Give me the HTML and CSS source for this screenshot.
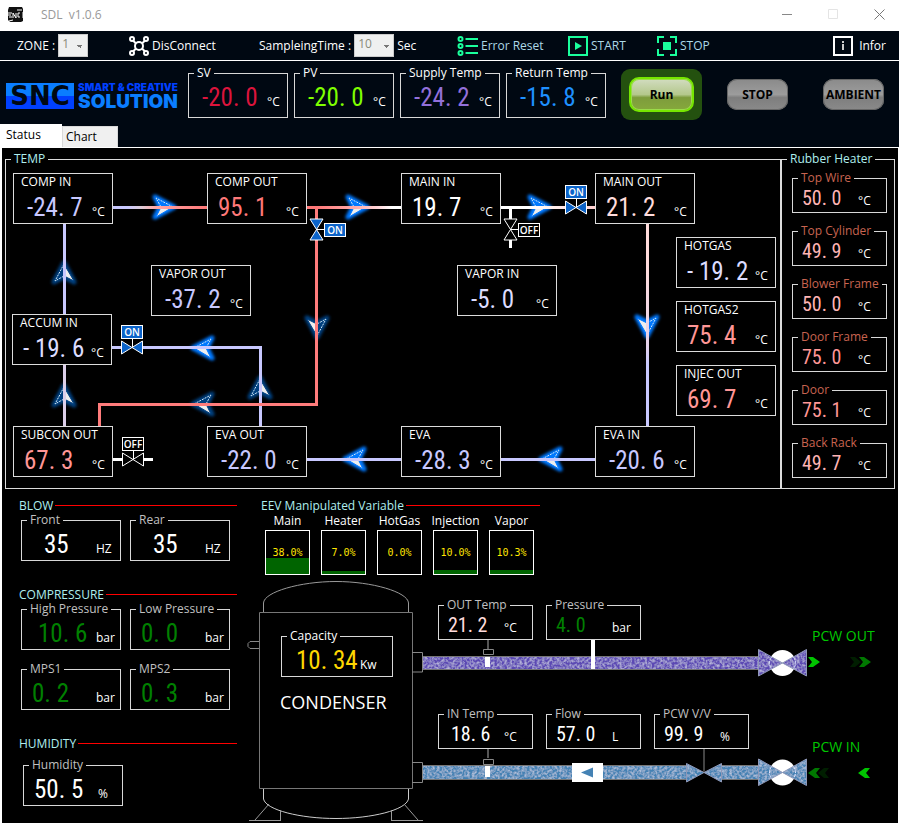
FILE: index.html
```html
<!DOCTYPE html>
<html lang="en">
<head>
<meta charset="utf-8">
<title>SDL v1.0.6</title>
<link rel="stylesheet" href="styles.css">
</head>
<body>
<header class="titlebar">
  <svg class="app-icon" width="16" height="16" viewBox="0 0 16 16" aria-hidden="true">
    <path d="M1 0h13l1 2v12l-2 1H2l-2-2V3z" fill="#111"/>
    <path d="M0 6h4M0 8h3M1 10h3M5 11V6l3 5V6M14 3H9M12 6h-2v4h2M15 5v6M1 14l4-1" stroke="#fff" fill="none"/>
  </svg>
  <span class="app-name">SDL&nbsp; v1.0.6</span>
  <div class="window-buttons">
    <button type="button" aria-label="Minimize"><svg width="11" height="11"><path d="M0 5.500h10" stroke="#888"/></svg></button>
    <button type="button" aria-label="Maximize" disabled><svg width="11" height="11"><path d="M.5.5h9v9h-9z" stroke="#e4e4e4" fill="none"/></svg></button>
    <button type="button" aria-label="Close"><svg width="11" height="11"><path d="M.5.5l10 10M10.500.5l-10 10" stroke="#777"/></svg></button>
  </div>
</header>

<nav class="toolbar">
  <div class="tool">
    <label for="zone">ZONE :</label>
    <select id="zone" class="combo"><option>1</option></select>
  </div>
  <button type="button" class="tool">
    <svg width="20" height="20" viewBox="0 0 20 20" fill="none" stroke="#fff" stroke-width="2">
      <circle cx="3" cy="3" r="2"/><circle cx="17" cy="3" r="2"/><circle cx="3" cy="17" r="2"/><circle cx="17" cy="17" r="2"/>
      <circle cx="10" cy="10" r="4"/><path d="M4 4.500l3 3M16 4.500l-3 3M4 15.500l3-3M16 15.500l-3-3"/>
    </svg>DisConnect</button>
  <div class="tool">
    <label for="sampling">SampleingTime :</label>
    <select id="sampling" class="combo combo-wide"><option>10</option></select>
    <span>Sec</span>
  </div>
  <button type="button" class="tool tool-blue">
    <svg width="21" height="20" viewBox="0 0 21 20" fill="none" stroke="#1aff9c" stroke-width="2">
      <circle cx="3.500" cy="3" r="2"/><circle cx="3.500" cy="10" r="2"/><circle cx="3.500" cy="17" r="2"/>
      <path d="M8.500 3H21M8.500 10H21M8.500 17H21"/>
    </svg>Error Reset</button>
  <button type="button" class="tool tool-blue">
    <svg width="20" height="20" viewBox="0 0 20 20"><path d="M1 1h18v18H1z" fill="none" stroke="#1aff9c" stroke-width="2"/><path d="M7 6l7 4-7 4z" fill="#1aff9c"/></svg>START</button>
  <button type="button" class="tool tool-blue">
    <svg width="20" height="20" viewBox="0 0 20 20"><path d="M1 7V1h6M13 1h6v6M19 13v6h-6M7 19H1v-6" fill="none" stroke="#1aff9c" stroke-width="2"/><path d="M6 6h8v8H6z" fill="#1aff9c"/></svg>STOP</button>
  <button type="button" class="tool tool-info">
    <svg width="20" height="20" viewBox="0 0 20 20"><path d="M1 1h18v18H1z" fill="none" stroke="#fff" stroke-width="2"/><path d="M9 5h2v2H9zM9 8h2v6H9z" fill="#ccc"/></svg>Infor</button>
</nav>

<section class="summary">
  <div class="logo">
    <span class="logo-mark">SNC</span>
    <span class="logo-text"><small>SMART &amp; CREATIVE</small><strong>SOLUTION</strong></span>
  </div>
  <fieldset class="panel bright tall"><legend>SV</legend><div class="reading"><output class="led neg c-sv">-20. 0</output><span>°C</span></div></fieldset>
  <fieldset class="panel bright tall"><legend>PV</legend><div class="reading"><output class="led neg c-pv">-20. 0</output><span>°C</span></div></fieldset>
  <fieldset class="panel bright tall"><legend>Supply Temp</legend><div class="reading"><output class="led neg c-supply">-24. 2</output><span>°C</span></div></fieldset>
  <fieldset class="panel bright tall"><legend>Return Temp</legend><div class="reading"><output class="led neg c-return">-15. 8</output><span>°C</span></div></fieldset>
  <div class="commands">
    <div class="run-frame"><button type="button" class="command run">Run</button></div>
    <button type="button" class="command">STOP</button>
    <button type="button" class="command">AMBIENT</button>
  </div>
</section>

<div class="tabs" role="tablist">
  <button type="button" role="tab" class="tab active" aria-selected="true">Status</button>
  <button type="button" role="tab" class="tab" aria-selected="false">Chart</button>
</div>

<main class="page">
  <div class="upper">
    <fieldset class="group temp">
      <legend>TEMP</legend>
      <div class="canvas">
        <svg class="wires" width="775" height="322" viewBox="6 166 775 322" aria-hidden="true">
          <defs>
            <filter id="glow" filterUnits="userSpaceOnUse" x="-24" y="-24" width="48" height="48"><feGaussianBlur stdDeviation="1.500"/></filter>
            <linearGradient id="g1" gradientUnits="userSpaceOnUse" x1="113" x2="207" y1="0" y2="0"><stop offset=".15" stop-color="#c8c8ff"/><stop offset=".3" stop-color="#dcccd8"/><stop offset=".45" stop-color="#ffa8a8"/><stop offset="1" stop-color="#ff7878"/></linearGradient>
            <linearGradient id="g2" gradientUnits="userSpaceOnUse" x1="307" x2="401" y1="0" y2="0"><stop offset=".1" stop-color="#ff7878"/><stop offset=".5" stop-color="#ffaaaa"/><stop offset=".75" stop-color="#ffd4d8"/><stop offset=".9" stop-color="#fff"/></linearGradient>
            <linearGradient id="g3" gradientUnits="userSpaceOnUse" x1="501" x2="595" y1="0" y2="0"><stop offset=".3" stop-color="#fff"/><stop offset="1" stop-color="#ffd0d0"/></linearGradient>
            <linearGradient id="g4" gradientUnits="userSpaceOnUse" x1="0" x2="0" y1="223" y2="426"><stop offset=".2" stop-color="#ffdcdc"/><stop offset=".6" stop-color="#e6d2ea"/><stop offset=".7" stop-color="#c8c8ff"/></linearGradient>
            <g id="arrow">
              <path class="halo" filter="url(#glow)" d="M10 0L-9-10L-4 0L-9 10z"/>
              <path d="M9 0L-8-9L-3 0" fill="none" stroke="#cfe6f5" stroke-dasharray="2 1"/>
              <path d="M9 0L-8 10L-3 0z" fill="#eee"/>
            </g>
            <path id="valve" d="M-10.500-6.500V6.500L10.500-6.500V6.500z" stroke="#fff"/>
          </defs>
          <g class="dim">
            <use href="#arrow" transform="translate(64 273) rotate(-90)"/>
            <use href="#arrow" transform="translate(64 396) rotate(-90)"/>
            <use href="#arrow" transform="translate(260 388) rotate(-90)"/>
            <use href="#arrow" transform="translate(203 404) scale(-1 1)"/>
            <use href="#arrow" transform="translate(317 327) rotate(90)"/>
          </g>
          <g class="lit">
            <use href="#arrow" transform="translate(164 207)"/>
            <use href="#arrow" transform="translate(357 207)"/>
            <use href="#arrow" transform="translate(539 207)"/>
            <use href="#arrow" transform="translate(203 348) scale(-1 1)"/>
            <use href="#arrow" transform="translate(355 459) scale(-1 1)"/>
            <use href="#arrow" transform="translate(551 459) scale(-1 1)"/>
            <use href="#arrow" transform="translate(647 326) rotate(90)"/>
          </g>
          <g fill="none" stroke="#c8c8ff" stroke-width="3">
            <path d="M64.500 223v91"/>
            <path d="M64.500 364v62" stroke="#dccfea"/>
            <path d="M260.500 426v-78.500H112"/>
            <path d="M307 459.500h94M501 459.500h94"/>
            <path d="M316.500 207v197.500H99.500V426" stroke="#ff7c7c"/>
            <path d="M510.500 207v41" stroke="#fff"/>
            <path d="M113 459.500h40" stroke="#fff"/>
          </g>
          <path d="M113 206h94v3h-94z" fill="url(#g1)"/>
          <path d="M307 206h94v3h-94z" fill="url(#g2)"/>
          <path d="M501 206h94v3h-94z" fill="url(#g3)"/>
          <path d="M646 223h3v203h-3z" fill="url(#g4)"/>
          <path d="M310 219h13v21h-13zM504 219h13v21h-13zM122 453h22v13h-22zM121 341h22v13h-22zM565 201h22v13h-22z" fill="#000"/>
          <path d="M132.500 338v9M576.500 199v8M316 229.500h9M510 229.500h9M133.500 450v9" stroke="#fff"/>
          <g fill="#0b63c9">
            <use href="#valve" transform="translate(132 347.500)"/>
            <use href="#valve" transform="translate(576 207.500)"/>
            <use href="#valve" transform="translate(316.500 229.500) rotate(90)"/>
          </g>
          <g fill="#000">
            <use href="#valve" transform="translate(510.500 229.500) rotate(90)"/>
            <use href="#valve" transform="translate(133 459.500)"/>
          </g>
        </svg>

        <div class="node at-comp-in"><h3>COMP IN</h3><div class="reading"><output class="led neg c-cold">-24. 7</output><span>°C</span></div></div>
        <div class="node at-comp-out"><h3>COMP OUT</h3><div class="reading"><output class="led c-hot">95. 1</output><span>°C</span></div></div>
        <div class="node at-main-in"><h3>MAIN IN</h3><div class="reading"><output class="led c-white">19. 7</output><span>°C</span></div></div>
        <div class="node at-main-out"><h3>MAIN OUT</h3><div class="reading"><output class="led c-blush">21. 2</output><span>°C</span></div></div>
        <div class="node at-vapor-out"><h3>VAPOR OUT</h3><div class="reading"><output class="led neg c-cold">-37. 2</output><span>°C</span></div></div>
        <div class="node at-vapor-in"><h3>VAPOR IN</h3><div class="reading"><output class="led neg c-cool">-5. 0</output><span>°C</span></div></div>
        <div class="node at-hotgas"><h3>HOTGAS</h3><div class="reading"><output class="led c-cool">- 19. 2</output><span>°C</span></div></div>
        <div class="node at-hotgas2"><h3>HOTGAS2</h3><div class="reading"><output class="led c-warm">75. 4</output><span>°C</span></div></div>
        <div class="node at-injec"><h3>INJEC OUT</h3><div class="reading"><output class="led c-warm">69. 7</output><span>°C</span></div></div>
        <div class="node at-accum"><h3>ACCUM IN</h3><div class="reading"><output class="led c-cool">- 19. 6</output><span>°C</span></div></div>
        <div class="node at-subcon"><h3>SUBCON OUT</h3><div class="reading"><output class="led c-warm">67. 3</output><span>°C</span></div></div>
        <div class="node at-eva-out"><h3>EVA OUT</h3><div class="reading"><output class="led neg c-cold">-22. 0</output><span>°C</span></div></div>
        <div class="node at-eva"><h3>EVA</h3><div class="reading"><output class="led neg c-cold">-28. 3</output><span>°C</span></div></div>
        <div class="node at-eva-in"><h3>EVA IN</h3><div class="reading"><output class="led neg c-cold">-20. 6</output><span>°C</span></div></div>

        <span class="state on at-v1">ON</span>
        <span class="state on at-v2">ON</span>
        <span class="state on at-v3">ON</span>
        <span class="state at-v4">OFF</span>
        <span class="state at-v5">OFF</span>
      </div>
    </fieldset>
    <fieldset class="group heater">
      <legend>Rubber Heater</legend>
      <div class="heater-list">
        <fieldset class="panel rust small"><legend>Top Wire</legend><div class="reading"><output class="led c-pink">50. 0</output><span>°C</span></div></fieldset>
        <fieldset class="panel rust small"><legend>Top Cylinder</legend><div class="reading"><output class="led c-pink">49. 9</output><span>°C</span></div></fieldset>
        <fieldset class="panel rust small"><legend>Blower Frame</legend><div class="reading"><output class="led c-pink">50. 0</output><span>°C</span></div></fieldset>
        <fieldset class="panel rust small"><legend>Door Frame</legend><div class="reading"><output class="led c-warm">75. 0</output><span>°C</span></div></fieldset>
        <fieldset class="panel rust small"><legend>Door</legend><div class="reading"><output class="led c-warm">75. 1</output><span>°C</span></div></fieldset>
        <fieldset class="panel rust small"><legend>Back Rack</legend><div class="reading"><output class="led c-pink">49. 7</output><span>°C</span></div></fieldset>
      </div>
    </fieldset>
  </div>

  <div class="lower">
    <div class="side">
      <section class="block">
        <h2>BLOW</h2>
        <div class="pair">
          <fieldset class="panel"><legend>Front</legend><div class="reading"><output class="led deep c-white">35</output><span>HZ</span></div></fieldset>
          <fieldset class="panel"><legend>Rear</legend><div class="reading"><output class="led deep c-white">35</output><span>HZ</span></div></fieldset>
        </div>
      </section>
      <section class="block">
        <h2>COMPRESSURE</h2>
        <div class="pair">
          <fieldset class="panel"><legend>High Pressure</legend><div class="reading"><output class="led inset c-green">10. 6</output><span>bar</span></div></fieldset>
          <fieldset class="panel"><legend>Low Pressure</legend><div class="reading"><output class="led c-green">0. 0</output><span>bar</span></div></fieldset>
          <fieldset class="panel"><legend>MPS1</legend><div class="reading"><output class="led c-green">0. 2</output><span>bar</span></div></fieldset>
          <fieldset class="panel"><legend>MPS2</legend><div class="reading"><output class="led c-green">0. 3</output><span>bar</span></div></fieldset>
        </div>
      </section>
      <section class="block humidity">
        <h2>HUMIDITY</h2>
        <div class="pair">
          <fieldset class="panel"><legend>Humidity</legend><div class="reading"><output class="led c-white">50. 5</output><span>%</span></div></fieldset>
        </div>
      </section>
    </div>

    <div class="plant">
      <section class="eev">
        <h2>EEV Manipulated Variable</h2>
        <div class="valves">
          <div class="valve"><span>Main</span><div class="gauge"><i style="height:38%"></i><b>38.0%</b></div></div>
          <div class="valve"><span>Heater</span><div class="gauge"><i style="height:7%"></i><b>7.0%</b></div></div>
          <div class="valve"><span>HotGas</span><div class="gauge"><i style="height:0%"></i><b>0.0%</b></div></div>
          <div class="valve"><span>Injection</span><div class="gauge"><i style="height:10%"></i><b>10.0%</b></div></div>
          <div class="valve"><span>Vapor</span><div class="gauge"><i style="height:10.3%"></i><b>10.3%</b></div></div>
        </div>
      </section>

      <div class="scene">
        <svg class="wires" width="653" height="245" viewBox="245 578 653 245" aria-hidden="true">
          <defs>
            <filter id="grain" x="0" y="0" width="100%" height="100%">
              <feTurbulence type="fractalNoise" baseFrequency=".4" numOctaves="2" seed="4"/>
              <feColorMatrix values="0 0 0 0 .9  0 0 0 0 .9  0 0 0 0 1  1 0 0 0 -.36"/>
              <feComposite in2="SourceGraphic" operator="in"/>
              <feMerge><feMergeNode in="SourceGraphic"/><feMergeNode/></feMerge>
            </filter>
          </defs>
          <g fill="none" stroke="#999">
            <path d="M263.500 612v-9C264 592 300 581.500 336 581.500S408 592 408.500 603v9"/>
            <path d="M259.500 612.500v176h153v-176z" stroke="#777"/>
            <path d="M263.500 789v10C266 810 300 818.500 336 818.500S406 810 408.500 799v-10" stroke="#ccc"/>
            <path d="M269 804l-14 16M280.500 810v10M249 820.500h32M404 804l14 16M391.500 810v10M391 820.500h32" stroke="#999"/>
            <path d="M259 641.500h-9l-2 2v3l2 2h9M412 652.500h10.500v19.500H412M412 762.500h10.500v20H412" stroke="#888"/>
          </g>
          <path d="M423 657h336v12H423z" fill="#5b48b4" filter="url(#grain)"/>
          <path d="M423 766h336v13H423z" fill="#4482b4" filter="url(#grain)"/>
          <path d="M423 656.500h336M423 669.500h336M423 765.500h336M423 779.500h336" stroke="#777"/>
          <path d="M758 656h24v14h-24zM758 765h24v15h-24zM686 765h36v15h-36z" fill="#000"/>
          <g fill="#fff"><circle cx="782.500" cy="663" r="13"/><circle cx="782.500" cy="772.500" r="13"/></g>
          <g filter="url(#grain)">
            <path d="M758.500 649.500V676L782.500 663zM806.500 649.500V676L782.500 663z" fill="#5b48b4"/>
          </g>
          <g filter="url(#grain)">
            <path d="M758.500 759V785.500L782.500 772.500zM806.500 759V785.500L782.500 772.500zM686.500 763.500V782L704 772.500zM721.500 763.500V782L704 772.500z" fill="#4482b4"/>
          </g>
          <path d="M758.500 649.500V676L782.500 663zM806.500 649.500V676L782.500 663zM758.500 759V785.500L782.500 772.500zM806.500 759V785.500L782.500 772.500zM686.500 763.500V782L704 772.500zM721.500 763.500V782L704 772.500z" fill="none" stroke="#8f98b8"/>
          <g fill="none" stroke="#dde4ff" stroke-dasharray="3 1"><path d="M771.500 657q-4 6 0 12M793.500 657q4 6 0 12M771.500 766.500q-4 6 0 12M793.500 766.500q4 6 0 12"/></g>
          <path d="M704 749v23" stroke="#444" stroke-width="2"/>
          <path d="M488 640v9M488 749v9" stroke="#555" stroke-width="2"/>
          <path d="M483.500 649.500h10v5h-10zM483.500 759.500h10v5h-10z" stroke="#888" fill="#000"/>
          <path d="M485 657h5v10h-5zM485 766h5v11h-5zM591 639h4v30h-4zM572 763h31v19h-31z" fill="#fff"/>
          <path d="M581 772.500l12-5v10z" fill="#4482b4"/>
          <g>
            <path d="M808 657h5l7 5-7 5h-5l4-5z" fill="#00c400"/>
            <path d="M859 657h5l7 5-7 5h-5l4-5z" fill="#007800"/>
            <path d="M850 657h5l6 5-6 5h-5l4-5z" fill="#001e00"/>
            <path d="M820 768h-5l-7 5 7 5h5l-4-5z" fill="#007800"/>
            <path d="M829 768h-5l-6 5 6 5h5l-4-5z" fill="#001e00"/>
            <path d="M870 768h-5l-7 5 7 5h5l-4-5z" fill="#00c400"/>
          </g>
        </svg>
        <fieldset class="panel bright at-capacity"><legend>Capacity</legend><div class="reading"><output class="led inset c-gold">10. 34</output><span>Kw</span></div></fieldset>
        <span class="tank-name">CONDENSER</span>
        <fieldset class="panel small at-out-temp"><legend>OUT Temp</legend><div class="reading"><output class="led c-blush">21. 2</output><span>°C</span></div></fieldset>
        <fieldset class="panel small at-pressure"><legend>Pressure</legend><div class="reading"><output class="led c-green">4. 0</output><span>bar</span></div></fieldset>
        <fieldset class="panel small at-in-temp"><legend>IN Temp</legend><div class="reading"><output class="led inset c-white">18. 6</output><span>°C</span></div></fieldset>
        <fieldset class="panel small at-flow"><legend>Flow</legend><div class="reading"><output class="led c-white">57. 0</output><span>L</span></div></fieldset>
        <fieldset class="panel small at-pcw"><legend>PCW V/V</legend><div class="reading"><output class="led c-white">99. 9</output><span>%</span></div></fieldset>
        <span class="port at-pcw-out">PCW OUT</span>
        <span class="port at-pcw-in">PCW IN</span>
      </div>
    </div>
  </div>
</main>
</body>
</html>
```
FILE: styles.css
```css
* { box-sizing: border-box; }

body {
  margin: 0;
  min-height: 100vh;
  display: flex;
  flex-direction: column;
  overflow-x: hidden;
  background: #000812;
  color: #fff;
  font: 12px/16px "Open Sans", "Noto Sans", sans-serif;
}

h2, h3 { margin: 0; font-size: 12px; font-weight: 400; }
button { font: inherit; color: inherit; background: none; border: 0; padding: 0; }
svg { display: block; flex: none; }

/* window title */
.titlebar {
  display: flex;
  align-items: center;
  height: 31px;
  padding: 0 14px 2px 8px;
  background: #fff;
}
.app-name { margin-left: 17px; color: #999; }
.window-buttons { display: flex; gap: 35px; margin-left: auto; }

/* toolbar */
.toolbar {
  display: grid;
  grid-template-columns: 112px 130px 198px 111px 89px 1fr auto;
  align-items: center;
  height: 30px;
  padding: 0 13px 0 17px;
  border-bottom: 1px solid #fff;
}
.tool { display: flex; align-items: center; gap: 3px; text-align: left; white-space: nowrap; }
.tool-blue { color: #add8e6; }
.tool-info { gap: 6px; }
.combo {
  width: 30px;
  height: 23px;
  padding: 0 0 3px 3px;
  appearance: none;
  border: 1px solid #ccc;
  border-radius: 0;
  background: conic-gradient(from -45deg at 50% 100%, #777 90deg, transparent 0) right 4px top 10px / 6px 3px no-repeat #eff0f0;
  color: #8a8a7a;
  font: inherit;
}
.combo-wide { width: 40px; }

/* set-point summary */
.summary { display: flex; align-items: flex-start; gap: 6px; padding: 5px 15px 0 6px; }
.logo { display: flex; gap: 4px; width: 176px; padding-top: 17px; }
.logo-mark {
  width: 68px;
  height: 26px;
  background: linear-gradient(#0a7dff 50%, #0040ff 50%);
  color: #000812;
  font: 700 26px/26px "DejaVu Sans", sans-serif;
  text-align: center;
}
.logo-text { display: flex; flex-direction: column; font-family: Inter, sans-serif; white-space: nowrap; }
.logo-text small { color: #0040ff; font-size: 10px; line-height: 9px; font-weight: 900; }
.logo-text strong { color: #0a7dff; font-size: 19px; line-height: 20px; font-weight: 900; }
.commands { flex: 1; display: flex; align-items: center; padding-left: 9px; height: 57px; }
.run-frame { padding: 8px; margin-right: auto; border-radius: 9px; background: #24510f; }
.command {
  width: 61px;
  height: 31px;
  border-radius: 10px;
  background: linear-gradient(#8a8a8a, #9c9c9c 50%, #7e7e7e 60%, #8a8a8a);
  box-shadow: inset 0 0 0 1px #666;
  color: #000;
  font-weight: 700;
}
.command + .command { margin-left: 35px; }
.command.run {
  display: block;
  width: 65px;
  height: 35px;
  border: 2px solid #76e600;
  box-shadow: inset 0 0 0 1px #9bdc4a;
  background: linear-gradient(#d2dcc0, #b4c88c 50%, #7d9c3c 60%, #86a83c);
}

/* labelled read-outs */
.panel {
  position: relative;
  width: 100px;
  height: 48px;
  min-width: 0;
  margin: 0;
  padding: 0;
  flex: none;
  border: 1px solid #d8d8d8;
  color: #c0c0c0;
}
.panel legend { height: 14px; margin-left: 5px; padding: 0 3px; line-height: 14px; white-space: nowrap; }
.panel.tall { height: 52px; }
.panel.bright { color: #fff; }
.panel.rust { color: #c86450; }
.reading {
  display: grid;
  grid-template-columns: 78px auto;
  align-items: baseline;
  padding-top: 4px;
  color: #fff;
}
.side .reading { grid-template-columns: 74px auto; }
.led {
  padding-left: 10px;
  font: 400 25px/28px "Roboto Condensed", Roboto, sans-serif;
  white-space: pre;
}
.led.neg { padding-left: 13px; }
.led.inset { padding-left: 16px; }
.led.deep { padding-left: 22px; }
.small { width: 95px; height: 42px; }
.small .reading { grid-template-columns: 65px auto; padding-top: 3px; }
.small .led { padding-left: 9px; font-size: 20px; line-height: 20px; }
.small .led.inset { padding-left: 12px; }

.c-sv { color: #dc143c; }
.c-pv { color: #7fff00; }
.c-supply { color: #9370db; }
.c-return { color: #1e90ff; }
.c-cold { color: #c8c8ff; }
.c-cool { color: #dcdcff; }
.c-white { color: #fff; }
.c-blush { color: #ffdcdc; }
.c-pink { color: #ffb4b4; }
.c-warm { color: #ff9696; }
.c-hot { color: #ff7878; }
.c-green { color: #008000; }
.c-gold { color: #ffd700; }

/* tabs */
.tabs { display: flex; align-items: flex-end; height: 25px; border-bottom: 1px solid #fff; }
.tab {
  height: 21px;
  width: 56px;
  padding: 0 3px;
  border: 1px solid #d9d9d9;
  border-bottom: 0;
  background: #f0f0f0;
  color: #000;
  text-align: left;
}
.tab.active { width: 62px; height: 23px; padding: 0 5px 2px; border-color: #fff; background: #fff; }

.page {
  flex: 1;
  display: flex;
  flex-direction: column;
  padding: 4px 3px 0 3px;
  border: solid #fff;
  border-width: 0 1px 0 2px;
  background: #000;
}
.upper { display: flex; }
.group { margin: 0; padding: 0; min-width: 0; border: 1px solid #dcdcdc; }
.group > legend { height: 14px; margin-left: 5px; padding: 0 3px; line-height: 14px; color: #afeeee; }
.temp { flex: 1; }
.heater { width: 114px; }
.heater-list { display: flex; flex-direction: column; gap: 11px; padding: 5px 0 0 10px; }

/* refrigeration circuit */
.canvas { position: relative; height: 322px; }
.wires { position: absolute; left: 0; top: 0; }
.lit { fill: #0078ff; stroke: #0078ff; }
.dim { fill: #004080; stroke: #004080; }
.halo { stroke-width: 5px; stroke-linejoin: round; }
.node {
  position: absolute;
  width: 100px;
  height: 51px;
  border: 1px solid #dcdcdc;
  background: #000;
}
.node h3 { padding-left: 7px; line-height: 16px; }
.at-comp-in { left: 7px; top: 7px; }
.at-comp-out { left: 201px; top: 7px; }
.at-main-in { left: 395px; top: 7px; }
.at-main-out { left: 589px; top: 7px; }
.at-vapor-out { left: 145px; top: 99px; }
.at-vapor-in { left: 451px; top: 99px; }
.at-hotgas { left: 670px; top: 71px; }
.at-hotgas2 { left: 670px; top: 135px; }
.at-injec { left: 670px; top: 199px; }
.at-accum { left: 6px; top: 148px; }
.at-subcon { left: 7px; top: 260px; }
.at-eva-out { left: 201px; top: 260px; }
.at-eva { left: 395px; top: 260px; }
.at-eva-in { left: 589px; top: 260px; }

.state {
  position: absolute;
  width: 22px;
  height: 14px;
  border: 1px solid #fff;
  background: #000;
  font-size: 10px;
  font-weight: 600;
  line-height: 12px;
  text-align: center;
}
.state.on { background: #0b63c9; }
.at-v1 { left: 115px; top: 159px; }
.at-v2 { left: 559px; top: 19px; }
.at-v3 { left: 318px; top: 57px; }
.at-v4 { left: 512px; top: 57px; }
.at-v5 { left: 116px; top: 271px; }

/* lower half */
.lower { flex: 1; display: flex; color: #fff; }
.lower h2 { display: flex; align-items: center; gap: 2px; line-height: 15px; color: #afeeee; white-space: nowrap; }
.lower h2::after { content: ""; flex: 1; height: 1px; background: #f00; }
.side { width: 240px; padding: 9px 8px 0 14px; }
.block { margin-bottom: 26px; }
.pair { display: grid; grid-template-columns: 100px 100px; gap: 12px 9px; padding-left: 2px; }
.humidity { margin-bottom: 0; }
.humidity .pair { padding: 7px 0 0 4px; }
.plant { flex: 1; min-width: 0; }
.eev { width: 295px; padding: 9px 0 3px 16px; }
.valves { display: flex; gap: 11px; padding-left: 4px; }
.valve { width: 45px; }
.valve span { display: flex; justify-content: center; line-height: 15px; margin-bottom: 2px; white-space: nowrap; }
.gauge {
  display: grid;
  height: 45px;
  border: 1px solid #fff;
  align-items: center;
  justify-items: center;
}
.gauge i, .gauge b { grid-area: 1 / 1; }
.gauge i { width: 100%; align-self: end; background: #006400; }
.gauge b { color: #ffe600; font: 10px/12px "DejaVu Sans Mono", monospace; }

/* condenser and cooling-water lines */
.scene { position: relative; height: 245px; }
.scene .panel { position: absolute; }
.scene .at-capacity { left: 36px; top: 51px; width: 112px; }
.at-capacity .led.inset { padding-left: 14px; }
.tank-name { position: absolute; left: 35px; top: 112px; width: 110px; font-size: 18px; line-height: 24px; }
.at-out-temp { left: 193px; top: 20px; }
.at-pressure { left: 301px; top: 20px; }
.at-in-temp { left: 193px; top: 129px; }
.at-flow { left: 301px; top: 129px; }
.at-pcw { left: 409px; top: 129px; }
.port { position: absolute; left: 567px; color: #00c800; font-size: 14px; line-height: 18px; white-space: nowrap; }
.at-pcw-out { top: 49px; }
.at-pcw-in { top: 160px; }
```
